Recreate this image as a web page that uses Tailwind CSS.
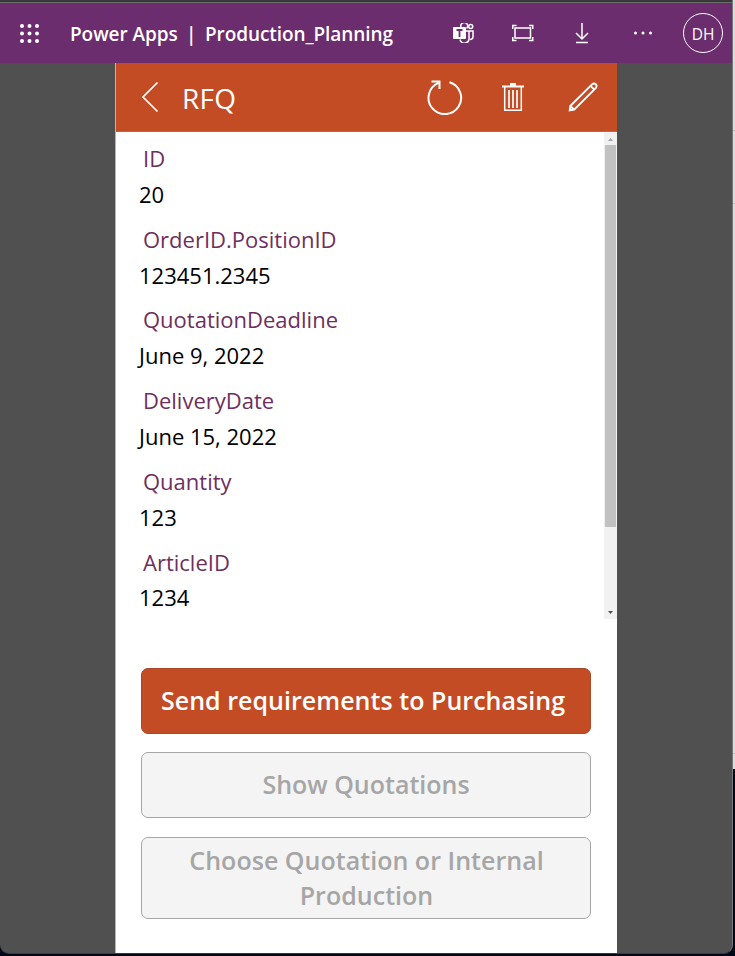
<!DOCTYPE html>
<html lang="en">
<head>
<meta charset="utf-8">
<title>Power Apps | Production_Planning</title>
<script src="https://cdn.jsdelivr.net/npm/@tailwindcss/browser@4"></script>
</head>
<body class="relative h-[956px] w-[735px] overflow-hidden bg-[#020817] font-['Open_Sans',sans-serif]">
<!-- Window behind the app -->
<div class="absolute top-0 right-0 flex h-[769px] w-[10px] flex-col bg-[#dcdcdc]">
  <div class="h-[131px] border-b border-[#bdbdbd]"></div>
  <div class="h-[73px] border-b border-[#bdbdbd]"></div>
  <div class="h-[550px] border-b border-[#bdbdbd]"></div>
</div>
<div class="relative flex h-[954px] w-[733px] flex-col overflow-hidden rounded-b-[9px] border-r border-b border-r-[#777777] border-b-[#343b49] bg-[#505050]">
  <div class="h-[3px] shrink-0 border-b border-[#6b6b6b] bg-[#393939]"></div>
  <header class="flex h-[60px] shrink-0 items-center bg-[#6c2d6e] text-white">
    <svg class="ml-[19px] h-5 w-5 shrink-0" viewBox="0 0 20 20" fill="currentColor"><circle cx="3" cy="3" r="2"/><circle cx="10.500" cy="3" r="2"/><circle cx="18" cy="3" r="2"/><circle cx="3" cy="10.500" r="2"/><circle cx="10.500" cy="10.500" r="2"/><circle cx="18" cy="10.500" r="2"/><circle cx="3" cy="18" r="2"/><circle cx="10.500" cy="18" r="2"/><circle cx="18" cy="18" r="2"/></svg>
    <div class="ml-[31px] flex w-[383px] items-center pt-[2px] text-[19px] leading-6 font-semibold whitespace-nowrap">
      <span class="w-[116px] tracking-[-0.060px]">Power Apps</span>
      <span class="w-[19px] text-[19px] font-semibold">|</span>
      <span class="tracking-[-0.080px]">Production_Planning</span>
    </div>
    <svg class="h-[20px] w-[21px] shrink-0" viewBox="0 0 21 20" fill="none" stroke="currentColor" stroke-width="1.500"><rect x="0" y="4" width="13" height="12" rx="1" fill="currentColor" stroke="none"/><path d="M3.500 7h6M6.500 7v7" stroke="#6c2d6e" stroke-width="1.800"/><path d="M8 4a3.400 3.400 0 1 1 5.500 1.500"/><circle cx="17.700" cy="3.600" r="2"/><path d="M13 8h3v6.500a4.500 4.500 0 0 1-9 2M16 8h4v5.500q0 3-3 3"/></svg>
    <svg class="ml-[38px] h-[18px] w-[22px] shrink-0" viewBox="0 0 22 18" fill="none" stroke="currentColor" stroke-width="1.500"><rect x="3" y="4" width="15.500" height="10"/><path d="M.75 5V1.500H4.500M17 1.500h3.750V5M.75 13v3.500H4.500M17 16.500h3.750V13"/></svg>
    <svg class="ml-[41px] h-[22px] w-[14px] shrink-0" viewBox="0 0 14 22" fill="none" stroke="currentColor" stroke-width="1.500"><path d="M7 1v16M1 11l6 6 6-6M1 20.500h12"/></svg>
    <svg class="ml-[44px] h-[4px] w-[20px] shrink-0" viewBox="0 0 20 4" fill="currentColor"><circle cx="2.500" cy="2" r="1.500"/><circle cx="10" cy="2" r="1.500"/><circle cx="17.500" cy="2" r="1.500"/></svg>
    <div class="ml-[30px] flex h-[40px] w-[40px] shrink-0 items-center justify-center rounded-full border border-white pt-[4px] text-[15.500px] leading-none">DH</div>
  </header>
  <main class="ml-[115px] flex h-[890px] w-[502px] flex-col border-l border-[#b5b5b5] bg-white">
    <div class="flex h-[69px] shrink-0 items-center border-b border-[#c9633f] bg-[#c34c24] text-white">
      <svg class="ml-[25px] h-[32px] w-[18px] shrink-0" viewBox="0 0 18 32" fill="none" stroke="currentColor" stroke-width="1.700"><path d="M16.500 1.500 2 16l14.500 14.500"/></svg>
      <h1 class="ml-[23px] w-[245px] pt-[1px] text-[28px] leading-9 tracking-[0.2px]">RFQ</h1>
      <svg class="h-[36px] w-[36px] shrink-0" viewBox="0 0 36 36" fill="none" stroke="currentColor" stroke-width="2"><path d="M22.500 3.200A16.300 16.300 0 1 1 11.500 3.800M4.500 2.500h8V10"/></svg>
      <svg class="ml-[39px] h-[30px] w-[22px] shrink-0" viewBox="0 0 22 30" fill="none" stroke="currentColor" stroke-width="1.500"><path d="M0 4.500h22" stroke-width="2"/><path d="M8 2.500h6" stroke-width="3"/><path d="M2.700 5v23.200h16.600V5"/><path d="M7 8v18M11 8v18M15 8v18" stroke-width="1.700"/></svg>
      <svg class="ml-[44px] h-[30px] w-[30px] shrink-0" viewBox="0 0 30 30" fill="none" stroke="currentColor" stroke-width="1.900"><path d="M1.700 28.300 2.300 24 24 2.400Q26 .8 28 2.400 29.300 4.300 27.700 6.100L6.200 27.700ZM2.300 24l3.900 3.700M22.800 4.200l3.200 3.200"/></svg>
    </div>
    <div class="flex h-[487px] shrink-0">
      <dl class="flex-1 pt-[8px] pl-[23px] text-[22px] leading-[36px] [&>div]:h-[80.700px] [&_dt]:pl-[4px] [&_dt]:text-[#6e2f60] [&_dd]:text-black">
        <div><dt>ID</dt><dd>20</dd></div>
        <div><dt>OrderID.PositionID</dt><dd>123451.2345</dd></div>
        <div><dt>QuotationDeadline</dt><dd>June 9, 2022</dd></div>
        <div><dt>DeliveryDate</dt><dd>June 15, 2022</dd></div>
        <div><dt>Quantity</dt><dd>123</dd></div>
        <div><dt class="pt-px">ArticleID</dt><dd class="-mt-px">1234</dd></div>
      </dl>
      <div class="flex w-[13px] flex-col items-center bg-[#f1f1f1]">
        <svg class="h-[13px] w-[11px] shrink-0" viewBox="0 0 11 13"><path d="M3 9 5.500 6 8 9z" fill="#a3a3a3"/></svg>
        <div class="h-[382px] w-[11px] bg-[#c1c1c1]"></div>
        <svg class="mt-auto h-[13px] w-[11px] shrink-0" viewBox="0 0 11 13"><path d="M3 5 5.500 8 8 5z" fill="#505050"/></svg>
      </div>
    </div>
    <div class="mt-[49px] ml-[25px] flex w-[450px] flex-col text-center text-[25px] leading-[35px] font-semibold">
      <button class="h-[66px] rounded-[7px] border border-[#a94726] bg-[#c34c24] pr-[6px] pb-[2px] tracking-[0.040px] text-white">Send requirements to Purchasing</button>
      <button class="mt-[18px] h-[66px] rounded-[7px] border border-[#a6a6a6] bg-[#f4f4f4] pb-[2px] text-[#a6a6a6]">Show Quotations</button>
      <button class="mt-[19px] h-[82px] rounded-[7px] border border-[#a6a6a6] bg-[#f4f4f4] pl-[1px] tracking-[0.030px] text-[#a6a6a6]">Choose Quotation or Internal<br>Production</button>
    </div>
  </main>
</div>
</body>
</html>
